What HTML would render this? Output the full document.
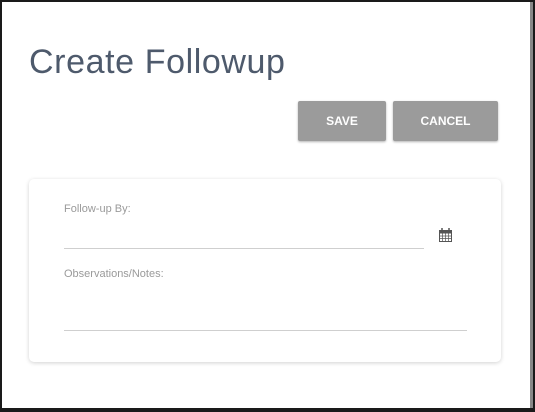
<!DOCTYPE html>
<html><head><style>
html,body{margin:0;padding:0;width:535px;height:412px;overflow:hidden;background:#1a1a1a;font-family:"Liberation Sans",sans-serif;}
.win{position:absolute;left:2px;top:2px;width:528px;height:406px;background:#fff;border-right:3px solid #888;}
.title{position:absolute;left:27px;top:41px;font-size:34px;font-weight:300;color:#4e5a6c;letter-spacing:0.6px;}
.btn{position:absolute;top:99px;height:40px;background:#9b9b9b;border-radius:2px;color:#fff;font-size:12px;font-weight:bold;text-align:center;line-height:40px;box-shadow:0 1px 2px rgba(0,0,0,.3);}
.card{position:absolute;left:27px;top:177px;width:472px;height:183px;background:#fff;border-radius:5px;box-shadow:0 1px 4px rgba(0,0,0,.18);}
.lbl{position:absolute;font-size:11px;color:#9a9a9a;}
.line{position:absolute;height:1px;background:#cfcfcf;}
</style></head><body>
<div class="win">
<div class="title">Create Followup</div>
<div class="btn" style="left:296px;width:88px;">SAVE</div>
<div class="btn" style="left:391px;width:105px;">CANCEL</div>
<div class="card">
<div class="lbl" style="left:35px;top:24px;">Follow-up By:</div>
<div class="line" style="left:35px;top:69px;width:360px;"></div>
<svg style="position:absolute;left:410px;top:49px" width="13" height="14" viewBox="0 0 13 14"><rect x="0.5" y="2.5" width="12" height="11" fill="none" stroke="#555"/><rect x="0.5" y="2.5" width="12" height="3" fill="#555"/><path d="M3 0v4M10 0v4" stroke="#555" stroke-width="1.5"/><path d="M0 8h13M0 10.5h13M3.5 5v9M6.5 5v9M9.5 5v9" stroke="#555" stroke-width="0.7"/></svg>
<div class="lbl" style="left:35px;top:89px;">Observations/Notes:</div>
<div class="line" style="left:35px;top:151px;width:403px;"></div>
</div>
</div>
</body></html>
